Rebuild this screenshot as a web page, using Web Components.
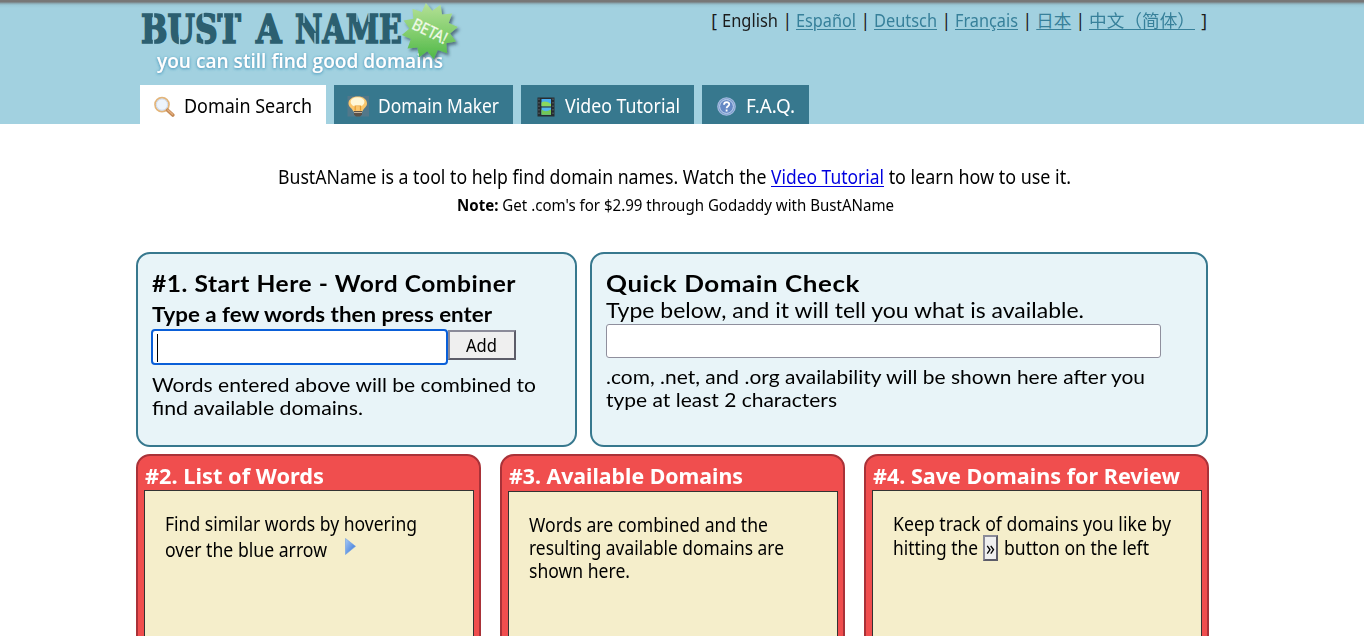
<!DOCTYPE html>
<html lang="en">
<head>
<meta charset="utf-8">
<title>Bust A Name</title>
<style>
body{margin:0;background:#fff;color:#000;font-family:"Noto Sans","Noto Sans CJK SC",sans-serif;font-size:19px;overflow:hidden}
</style>
</head>
<body>
<ban-page></ban-page>
<script>
const define=(name,html,setup)=>customElements.define(name,class extends HTMLElement{
  connectedCallback(){
    if(this.shadowRoot)return;
    const root=this.attachShadow({mode:'open'});
    const t=document.createElement('template');
    t.innerHTML=html;
    root.append(t.content.cloneNode(true));
    if(setup)setup(this,root);
  }
});

/* One line of text stretched or condensed to the width in its "w" attribute. */
define('fit-line',`<style>
:host{display:block;white-space:pre;flex:none}
span{display:inline-block;transform-origin:0 50%;vertical-align:top}
</style><span><slot></slot></span>`,(el,root)=>{
  const s=root.querySelector('span'),w=+el.getAttribute('w');
  el.style.width=w+'px';
  const n=s.getBoundingClientRect().width;
  if(n)s.style.transform=`scaleX(${w/n})`;
});

define('ban-logo',`<style>:host{display:block;width:330px;height:80px}svg{display:block}</style>
<svg width="330" height="80" viewBox="136 0 330 80">
<defs>
<linearGradient id="g" x1="0" y1="0" x2="0" y2="1"><stop offset="0" stop-color="#b5e096"/><stop offset=".5" stop-color="#86cf70"/><stop offset="1" stop-color="#4fb848"/></linearGradient>
<filter id="s" x="-20%" y="-20%" width="150%" height="150%"><feDropShadow dx="2" dy="2.5" stdDeviation="1.5" flood-color="#234" flood-opacity=".6"/></filter>
<filter id="h" x="-5%" y="-40%" width="110%" height="180%"><feDropShadow dx="0" dy=".8" stdDeviation="1.7" flood-color="#2f8ab4"/></filter>
</defs>
<g font-family="DejaVu Serif" font-weight="700" font-size="38.5" fill="#2c5f70" stroke="#2c5f70" stroke-width="1.7">
<text data-x="141" data-y="42.5" data-w="100">BUST</text>
<text data-x="256" data-y="42.5" data-w="25.500">A</text>
<text data-x="295" data-y="42.5" data-w="107">NAME</text>
</g>
<path stroke="#a2d1e0" stroke-width="1.3" fill="none" d="M153.500 12V21M153.500 36V45M179.500 36V45M203 12V20M204 37V45M223.500 12V20M234 12V20M268.500 26V33M304 12V23M315 33V45M334 26V33M357 12V22M369 12V22M391 12V20M391 36V45"/>
<text data-x="157" data-y="68" data-w="286" font-family="Open Sans" font-weight="600" font-size="19.5" fill="#fff" filter="url(#h)">you can still find good domains</text>
<polygon id="b" fill="url(#g)" filter="url(#s)"/>
<g transform="translate(430 31) rotate(26)"><text data-x="-18.500" data-y="6" data-w="37" font-family="Noto Sans" font-size="16.5" fill="#fff" stroke="#d5f0c4" stroke-width=".5">BETA!</text></g>
</svg>`,(el,root)=>{
  const p=[];
  for(let i=0;i<24;i++){
    const a=(i*15-98)*Math.PI/180,r=i%2?20.5:28.3;
    p.push((429.8+r*Math.cos(a)).toFixed(1)+','+(31+r*Math.sin(a)).toFixed(1));
  }
  root.getElementById('b').setAttribute('points',p.join(' '));
  for(const t of root.querySelectorAll('text')){
    const d=t.dataset;
    t.setAttribute('transform',`translate(${d.x} ${d.y}) scale(${d.w/t.getComputedTextLength()} 1)`);
  }
});

const icons={
search:`<circle cx="9" cy="8.6" r="7" fill="#dfeaf7" stroke="#e3b57a" stroke-width="1.7"/><circle cx="9" cy="8.6" r="5.6" fill="#edf4fc" stroke="#c9d5e8" stroke-width=".8"/><path d="M14.6 14.2 19.8 19" stroke="#c58a55" stroke-width="3.600" stroke-linecap="round"/><path d="M14.8 14 19.500 18.300" stroke="#e4b080" stroke-width="1.3" stroke-linecap="round"/>`,
bulb:`<rect y="0" x=".500" width="21.500" height="20.500" fill="#52788a"/><path d="M1.5 7.500C1.5 3.200 5.500.500 10.800.500S20 3.200 20 7.500c0 3.400-3.300 4.500-4.600 8H6.300C5 12 1.500 11 1.500 7.500z" fill="#fbc76c"/><ellipse cx="10.500" cy="6" rx="7" ry="4.800" fill="#fff8d8"/><path d="M8.200 14.500V10H13.500V14.500" fill="none" stroke="#e79b2d" stroke-width="1.200"/><path d="M7 15h8v3.500l-2 2H9l-2-2z" fill="#5b5248"/><path d="M7 16.500h8" stroke="#c4b39e"/>`,
film:`<rect x="3.500" y="1.500" width="17" height="19" fill="#272c30"/><path d="M5 2.500v17.500M19 2.500v17.500" stroke="#59636a" stroke-width="1.200" stroke-dasharray="1.500 2"/><rect x="7.500" y="3" width="9.500" height="7.300" fill="#48aef0"/><path d="M7.500 6.500q4-2.500 9.500 1.500v2.300H7.500z" fill="#8bd85d"/><rect x="7.500" y="11.500" width="9.500" height="7.300" fill="#52b5ee"/><path d="M7.500 13.500q4 3.500 9.500 0v5.300H7.500z" fill="#73c855"/>`,
help:`<circle cx="11.500" cy="10.500" r="8.700" fill="#6f94cb" stroke="#a0b8dc" stroke-width="1.300"/><circle cx="11.500" cy="10.500" r="6.900" fill="#6589c5" stroke="#c5d6ee"/><path d="M9 8.700c.1-3.500 5.500-3.300 5.200-.2-.2 1.800-2.600 1.700-2.600 3.800M11.600 13.600v2" fill="none" stroke="#fff" stroke-width="1.800"/>`
};
define('ban-tab',`<style>
:host{display:flex;align-items:flex-start;box-sizing:border-box;height:39px;padding:10px 14px 0 13px;background:#37788e;color:#fff;line-height:23px}
:host([active]){background:#fff;color:#000}
svg{flex:none;width:22px;height:22px;margin:1px 9px 0 0}
</style><svg viewBox="0 0 22 22"></svg><slot></slot>`,(el,root)=>{
  root.querySelector('svg').innerHTML=icons[el.getAttribute('icon')];
});

define('ban-languages',`<style>
:host{display:flex;font-size:17.5px;line-height:24px;color:#1b1b1b;margin-top:8px}
i{font-style:normal;width:18px;text-align:center}
a{color:#37809a;text-decoration:underline;text-underline-offset:2px}
.o{width:11px}.c{margin:0 1px 0 6px}
</style>
<span class="o">[</span><fit-line w="56">English</fit-line><i>|</i><fit-line w="60"><a>Español</a></fit-line><i>|</i><fit-line w="63"><a>Deutsch</a></fit-line><i>|</i><fit-line w="63"><a>Français</a></fit-line><i>|</i><fit-line w="35"><a>日本</a></fit-line><i>|</i><fit-line w="106"><a>中文（简体）</a></fit-line><span class="c">]</span>`);

define('ban-header',`<style>
:host{display:block;height:124px;background:linear-gradient(#777 0 2px,#86a0a9 3px,#9bc8d6 5px,#a2d1e0 8px)}
.top{display:flex;justify-content:space-between;height:85px;width:1072px;margin-left:136px}
nav{display:flex;gap:8px;margin-left:140px}
</style>
<div class="top"><ban-logo></ban-logo><ban-languages></ban-languages></div>
<nav>
<ban-tab icon="search" active><fit-line w="128">Domain Search</fit-line></ban-tab>
<ban-tab icon="bulb"><fit-line w="121">Domain Maker</fit-line></ban-tab>
<ban-tab icon="film"><fit-line w="115">Video Tutorial</fit-line></ban-tab>
<ban-tab icon="help"><fit-line w="49">F.A.Q.</fit-line></ban-tab>
</nav>`);

define('ban-intro',`<style>
:host{display:flex;flex-direction:column;height:128px;box-sizing:border-box;padding-top:42px;line-height:23px}
a{color:#0000e0;text-decoration:underline;text-underline-offset:2px}
.r{display:flex;margin-left:278px}
.n{margin:6px 0 0 457px;font-size:15.5px;line-height:20px}
</style>
<div class="r"><fit-line w="493">BustAName is a tool to help find domain names. Watch the </fit-line><fit-line w="113"><a>Video Tutorial</a></fit-line><fit-line w="187"> to learn how to use it.</fit-line></div>
<fit-line class="n" w="437"><b>Note:</b> Get .com's for $2.99 through Godaddy with BustAName</fit-line>`);

define('ban-panel',`<style>
:host{display:block;box-sizing:border-box;height:195px;border:2px solid #37788e;border-radius:14px;background:#e8f4f8;padding:15px 14px 0;font-family:Lato,sans-serif;font-size:19.5px;line-height:23px}
</style><slot></slot>`);

define('ban-combiner',`<style>
:host{display:block;width:441px}
.h{font-size:23px;font-weight:700;line-height:28px;letter-spacing:.5px}
.s{font-size:20.500px;font-weight:700;line-height:28px;margin-top:3px}
.row{display:flex;align-items:flex-start;height:44px;margin-top:1px}
.in{box-sizing:border-box;width:297px;height:36px;border:2px solid #0a5fd8;border-radius:4px;background:#fff;padding:3px 4px;margin-left:-1px}
.in::before{content:"";display:block;width:1px;height:28px;background:#000}
.btn{box-sizing:border-box;width:68px;height:30px;margin-top:1px;padding-left:16px;border:2px solid;border-color:#8b8b99 #5c5c68 #5c5c68 #8b8b99;background:#efefef;font:18.500px/26px "Noto Sans",sans-serif}
</style>
<ban-panel>
<fit-line class="h" w="364">#1. Start Here - Word Combiner</fit-line>
<fit-line class="s" w="340">Type a few words then press enter</fit-line>
<div class="row"><div class="in"></div><div class="btn"><fit-line w="31">Add</fit-line></div></div>
<fit-line w="384">Words entered above will be combined to</fit-line>
<fit-line w="211">find available domains.</fit-line>
</ban-panel>`);

define('ban-check',`<style>
:host{display:block;width:618px}
.h{font-size:23px;font-weight:700;line-height:28px;letter-spacing:.5px}
.s{font-size:20.500px;line-height:24px;margin-top:1px}
.in{box-sizing:border-box;width:555px;height:34px;border:1px solid #8f8f9d;border-radius:3px;background:#fff;margin:2px 0 7px}
</style>
<ban-panel>
<fit-line class="h" w="254">Quick Domain Check</fit-line>
<fit-line class="s" w="478">Type below, and it will tell you what is available.</fit-line>
<div class="in"></div>
<fit-line w="539">.com, .net, and .org availability will be shown here after you</fit-line>
<fit-line w="231">type at least 2 characters</fit-line>
</ban-panel>`);

define('ban-step',`<style>
:host{display:flex;flex-direction:column;box-sizing:border-box;width:345px;height:200px;border:2px solid #a93238;border-radius:14px 14px 0 0;background:#f04e4e;padding:6px 5px 0 6px}
.h{font-size:20.500px;font-weight:700;line-height:28px;color:#fff;padding-left:1px}
.body{flex:1;border:1px solid #333;background:#f5eecb;padding:22px 0 0 20px;line-height:23px}
:host([low]) .body{margin-top:1px}
</style><div class="h"><slot name="title"></slot></div><div class="body"><slot></slot></div>`);

define('ban-steps',`<style>
:host{display:flex;gap:19px;margin:7px 0 0 136px}
.r{display:flex}
.arrow{width:11px;height:17px;margin:-1px 0 0 17.500px}
.btn{box-sizing:border-box;width:15px;height:26px;margin:-2px 6px 0 5px;border:2px solid;border-color:#8b8b99 #5c5c68 #5c5c68 #8b8b99;background:#efefef;line-height:23px;text-align:center;display:flex;justify-content:center}
</style>
<ban-step>
<fit-line slot="title" w="179">#2. List of Words</fit-line>
<fit-line w="252">Find similar words by hovering</fit-line>
<div class="r" style="margin-top:3px"><fit-line w="162">over the blue arrow</fit-line><svg class="arrow" viewBox="0 0 11 17"><defs><linearGradient id="a" x2="1" y2="1"><stop stop-color="#a9cbf6"/><stop offset="1" stop-color="#2f6fd6"/></linearGradient></defs><path d="M.5.500 10.500 8.300.500 16.500z" fill="url(#a)" stroke="#6b9de4" stroke-width=".6"/></svg></div>
</ban-step>
<ban-step low>
<fit-line slot="title" w="234">#3. Available Domains</fit-line>
<fit-line w="239">Words are combined and the</fit-line>
<fit-line w="255">resulting available domains are</fit-line>
<fit-line w="101">shown here.</fit-line>
</ban-step>
<ban-step>
<fit-line slot="title" w="307">#4. Save Domains for Review</fit-line>
<fit-line w="278">Keep track of domains you like by</fit-line>
<div class="r" style="margin-top:1px"><fit-line w="85">hitting the</fit-line><div class="btn"><fit-line w="9">»</fit-line></div><fit-line w="145">button on the left</fit-line></div>
</ban-step>`);

define('ban-page',`<style>
:host{display:block;width:1364px;height:636px;overflow:hidden}
.row{display:flex;gap:13px;margin-left:136px}
</style>
<ban-header></ban-header>
<ban-intro></ban-intro>
<div class="row"><ban-combiner></ban-combiner><ban-check></ban-check></div>
<ban-steps></ban-steps>`);
</script>
</body>
</html>
